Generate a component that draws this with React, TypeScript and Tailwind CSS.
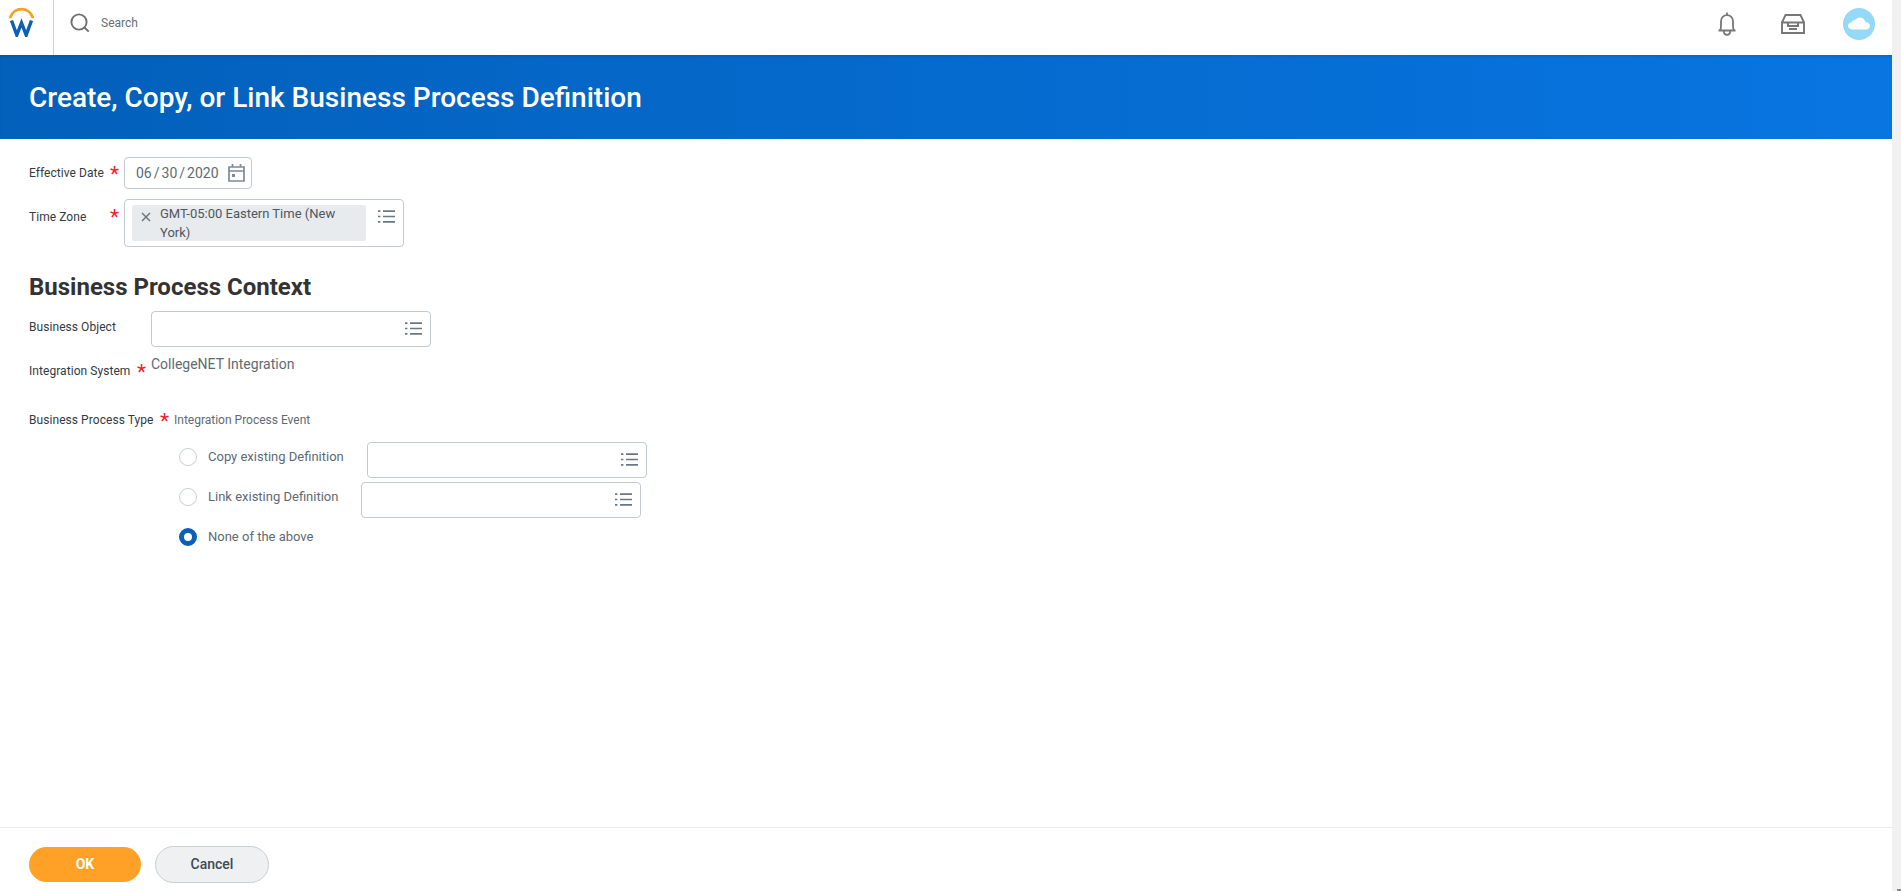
import React from "react";

const font = { fontFamily: "Roboto, sans-serif" };

function ListIcon({ className }: { className: string }) {
  return (
    <svg viewBox="0 0 17 13" className={className} fill="none" stroke="#6b7780" strokeWidth="1.7">
      <path d="M0 1.2h2.4M5 1.2h12M0 6.5h2.4M5 6.5h12M0 11.8h2.4M5 11.8h12" />
    </svg>
  );
}

function Star({ className }: { className: string }) {
  return <span className={`text-[#f31b2e] text-[21px] leading-[13px] h-[11px] w-[9px] flex justify-center ${className}`}>*</span>;
}

function Radio({ checked }: { checked?: boolean }) {
  return checked ? (
    <span className="w-[18px] h-[18px] mt-[6px] rounded-full border-[5px] border-[#0b5fb8] bg-white shrink-0" />
  ) : (
    <span className="w-[18px] h-[18px] mt-[6px] rounded-full border border-[#c9cfd4] bg-white shrink-0" />
  );
}

function Prompt({ className }: { className: string }) {
  return (
    <div className={`h-[36px] w-[280px] rounded-[4px] border border-[#c3cad0] bg-white flex items-center justify-end pr-[8px] pb-[2px] shrink-0 ${className}`}>
      <ListIcon className="w-[17px] h-[13px]" />
    </div>
  );
}

export default function App() {
  return (
    <div className="h-[891px] w-full flex overflow-hidden bg-white text-[#333b42]" style={font}>
      <div className="flex-1 min-w-0 flex flex-col">
        <header className="h-[55px] flex items-center shrink-0 pb-[9px]">
          <div className="w-[54px] h-[55px] -mb-[9px] border-r border-[#c8d0d6] flex items-start pl-[9px] pt-[7px] shrink-0">
            <svg viewBox="0 0 25 30" className="w-[25px] h-[30px]" fill="none">
              <path d="M1.400 10 A11.800 11.800 0 0 1 23.600 10" stroke="#f9a01b" strokeWidth="2.8" strokeLinecap="round" />
              <path d="M2.500 13.500 L7.800 28 L12.500 16 L17.200 28 L22.500 13.500" stroke="#0b5fb8" strokeWidth="3.4" strokeLinejoin="miter" />
            </svg>
          </div>
          <svg viewBox="0 0 20 20" className="w-[20px] h-[20px] ml-[16px] shrink-0" fill="none" stroke="#6f6f6f" strokeWidth="1.9">
            <circle cx="9" cy="9" r="7.6" />
            <path d="M14.500 14.500l4.200 4.200" />
          </svg>
          <span className="ml-[11px] text-[12px] text-[#666f76]">Search</span>
          <div className="flex-1" />
          <svg viewBox="0 0 18 24" className="w-[18px] h-[24px] mr-[45px] mt-[1px]" fill="none" stroke="#777" strokeWidth="1.8">
            <path d="M0.500 18.500h17M2 18.500c.9-1.400 1-3 1-5V9c0-3.300 2.600-5.800 6-5.800s6 2.500 6 5.800v4.500c0 2 .1 3.600 1 5M9 3.200V.5M5.800 18.700c0 5.400 6.400 5.400 6.400 0" />
          </svg>
          <svg viewBox="0 0 24 20" className="w-[24px] h-[20px] mr-[38px] mt-[1px]" fill="none" stroke="#777" strokeWidth="1.9">
            <path d="M1 8.500h22v10.500H1zM1 8.500L4.500 1h15L23 8.500M7 8.500v3.500h10V8.500M8 15h8" />
          </svg>
          <div className="w-[32px] h-[32px] rounded-full bg-[#94d9f7] flex items-center justify-center mr-[17px] mt-[1px]">
            <svg viewBox="0 0 24 13" className="w-[22px] h-[13px]" fill="#fff">
              <path d="M4.500 13C2 13 0 11.200 0 9s1.700-3.700 4-4C4.600 3.400 6 2.700 7.600 3 8.800 1.200 10.800 0 13 0c3 0 5.400 2 5.900 4.800 2.800 0 5.100 1.600 5.100 4.200 0 2.300-2 4-4.500 4z" />
            </svg>
          </div>
        </header>

        <div className="h-[84px] shrink-0 flex items-center pl-[29px] pt-[2px] bg-gradient-to-r from-[#0360bb] to-[#0875e1] shadow-[inset_0_2px_2px_rgba(0,0,0,0.08)]">
          <h1 className="text-[28px] leading-none font-medium text-white">Create, Copy, or Link Business Process Definition</h1>
        </div>

        <main className="flex-1 pl-[29px] pt-[18px] text-[12px]">
          <div className="flex items-center h-[32px]">
            <span className="w-[81px] tracking-[0.06px]">Effective Date</span>
            <Star className="mt-[1px]" />
            <div className="ml-[5px] w-[128px] h-[32px] rounded-[4px] border border-[#c3cad0] flex items-center pl-[11px] text-[14px] text-[#5e6a75]">
              <span className="flex gap-[2px] w-[82px] shrink-0 whitespace-nowrap"><span>06</span><span>/</span><span>30</span><span>/</span><span>2020</span></span>
              <svg viewBox="0 0 17 18" className="w-[17px] h-[18px] ml-[10px] shrink-0" fill="none" stroke="#7b8a96" strokeWidth="1.7">
                <path d="M1 3h15v14H1zM1 7h15M4.500 0v3.500M12.500 0v3.500" />
                <rect x="4" y="10" width="3" height="3" fill="#7b8a96" stroke="none" />
              </svg>
            </div>
          </div>

          <div className="flex items-start mt-[10px]">
            <span className="w-[81px] mt-[9px] tracking-[0.06px]">Time Zone</span>
            <Star className="mt-[12px]" />
            <div className="ml-[5px] w-[280px] h-[48px] rounded-[4px] border border-[#c3cad0] flex items-start pl-[7px] pt-[5px]">
              <div className="w-[234px] h-[36px] rounded-[2px] bg-[#e8ebed] flex items-start">
                <svg viewBox="0 0 10 10" className="w-[10px] h-[10px] ml-[9px] mt-[7px] shrink-0" fill="none" stroke="#6b7780" strokeWidth="1.5">
                  <path d="M1 1l8 8M9 1l-8 8" />
                </svg>
                <span className="ml-[9px] text-[13px] leading-[19px] text-[#4d5760] -mt-[1px]">GMT-05:00 Eastern Time (New York)</span>
              </div>
              <ListIcon className="w-[17px] h-[13px] ml-[12px] mt-[5px]" />
            </div>
          </div>

          <h2 className="text-[24px] leading-[28px] font-bold text-[#333] mt-[26px]">Business Process Context</h2>

          <div className="flex items-start mt-[10px]">
            <span className="w-[122px] mt-[7px] tracking-[0.06px]">Business Object</span>
            <Prompt className="" />
          </div>

          <div className="flex items-start mt-[7px]">
            <span className="w-[108px] mt-[8px] tracking-[0.06px]">Integration System</span>
            <Star className="mt-[12px]" />
            <span className="ml-[5px] text-[14px] text-[#5e6a75] leading-[20px]">CollegeNET Integration</span>
          </div>

          <div className="flex items-center mt-[31px]">
            <span className="w-[131px] tracking-[0.06px]">Business Process Type</span>
            <Star className="mt-[1px]" />
            <span className="ml-[5px] text-[#5e6a75]">Integration Process Event</span>
          </div>

          <div className="pl-[150px] mt-[13px] flex flex-col gap-[4px] text-[13px] leading-[18px] text-[#5e6a75]">
            <div className="flex items-start h-[36px]">
              <Radio />
              <span className="ml-[11px] mt-[6px] w-[159px]">Copy existing Definition</span>
              <Prompt className="" />
            </div>
            <div className="flex items-start h-[36px]">
              <Radio />
              <span className="ml-[11px] mt-[6px] w-[153px]">Link existing Definition</span>
              <Prompt className="" />
            </div>
            <div className="flex items-start h-[36px]">
              <Radio checked />
              <span className="ml-[11px] mt-[6px]">None of the above</span>
            </div>
          </div>
        </main>

        <footer className="h-[64px] shrink-0 border-t border-[#e8ebed] flex items-start pl-[29px] pt-[18px]">
          <button className="w-[112px] h-[35px] mt-[1px] rounded-full bg-[#ffa126] text-white text-[14px] font-bold">OK</button>
          <button className="ml-[14px] w-[114px] h-[37px] rounded-full bg-[#eef0f2] border border-[#c8cfd5] text-[14px] font-medium text-[#404a52]">Cancel</button>
        </footer>
      </div>
      <div className="w-[9px] shrink-0 bg-[#f1f1f1] flex flex-col justify-end items-end">
        <div className="w-[4px] h-[2px] bg-[#8a8a8a]" />
      </div>
    </div>
  );
}
